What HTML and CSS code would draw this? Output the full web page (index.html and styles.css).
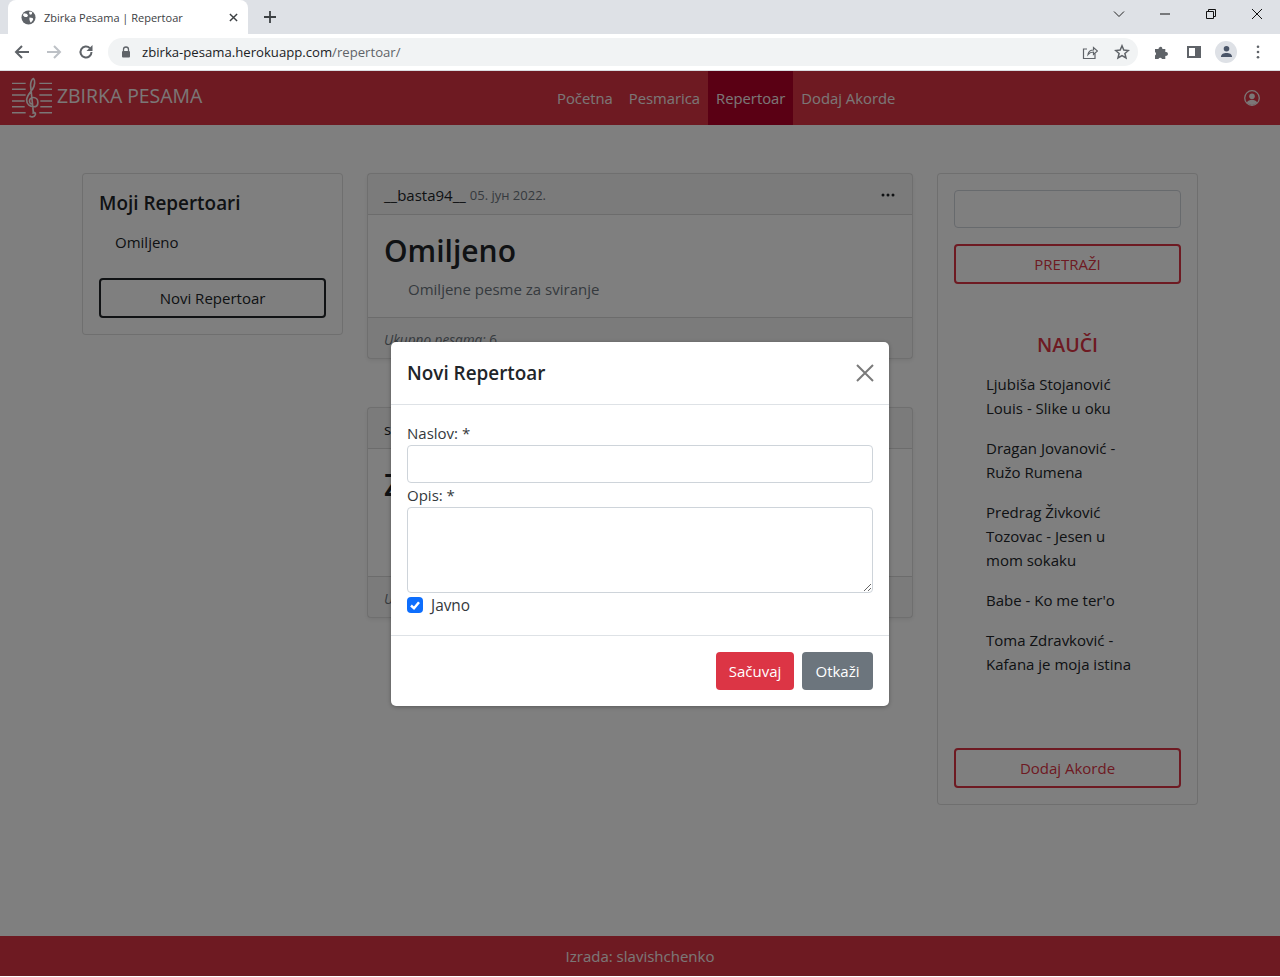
FILE: index.html
```html
<!DOCTYPE html>
<html lang="sr">

<head>
	<meta charset="UTF-8">
	<meta name="viewport" content="width=device-width, initial-scale=1.0">
	<title>Zbirka Pesama | Repertoar</title>
	<link rel="stylesheet" href="styles.css">
</head>

<body>
	<!-- browser window -->
	<div class="tabstrip">
		<div class="tab">
			<svg class="tab-globe" viewBox="0 0 16 16"><circle cx="8" cy="8" r="7.5" fill="#5f6368"/><path d="M3 3.500l3 .5 1.500 1.500-1 2-2.500 0-2-2zM9.500 1.500l2.500 1-.5 2-2 .5-1-2zM9 8l3.500.5.5 2-2.500 3-1-1.500-.5-2z" fill="#fff"/></svg>
			<span class="tab-title">Zbirka Pesama | Repertoar</span>
			<svg class="tab-close" viewBox="0 0 10 10"><path d="M1 1l8 8M9 1l-8 8" stroke="#3c4043" stroke-width="1.600"/></svg>
		</div>
		<svg class="tab-new" viewBox="0 0 12 12"><path d="M6 0v12M0 6h12" stroke="#3c4043" stroke-width="1.800"/></svg>
		<div class="win-btns">
			<svg viewBox="0 0 12 12"><path d="M1 3.500l5 5 5-5" fill="none" stroke="#222" stroke-width="1"/></svg>
			<svg viewBox="0 0 12 12"><path d="M1 6h10" stroke="#111" stroke-width="1"/></svg>
			<svg viewBox="0 0 12 12"><path d="M1.500 3.500h7v7h-7zM3.500 3.500v-2h7v7h-2" fill="none" stroke="#111" stroke-width="1"/></svg>
			<svg viewBox="0 0 12 12"><path d="M1 1l10 10M11 1l-10 10" stroke="#111" stroke-width="1"/></svg>
		</div>
	</div>
	<div class="toolbar">
		<svg class="tool-icon" viewBox="0 0 16 16"><path d="M15 8H2M8 2L2 8l6 6" fill="none" stroke="#5f6368" stroke-width="2"/></svg>
		<svg class="tool-icon" viewBox="0 0 16 16"><path d="M1 8h13M8 2l6 6-6 6" fill="none" stroke="#bdc1c6" stroke-width="2"/></svg>
		<svg class="tool-icon" viewBox="0 0 16 16"><path d="M13.500 8a5.500 5.500 0 1 1-1.600-3.900" fill="none" stroke="#5f6368" stroke-width="2"/><path d="M14.500 1v6h-6z" fill="#5f6368"/></svg>
		<div class="omnibox">
			<svg class="lock" viewBox="0 0 10 12"><path d="M2.500 5V3.500a2.500 2.500 0 0 1 5 0V5" fill="none" stroke="#5f6368" stroke-width="1.300"/><rect x="1" y="5" width="8" height="6.500" rx="1" fill="#5f6368"/></svg>
			<span class="url">zbirka-pesama.herokuapp.com<span class="url-path">/repertoar/</span></span>
			<svg class="omni-icon" viewBox="0 0 16 16"><path d="M13 9.500V14.500H1.500V5H5" fill="none" stroke="#5f6368" stroke-width="1.200"/><path d="M6 10.500c.5-3 2.500-4.500 5.500-4.500V3.500L15.500 7l-4 3.500V8c-2.500 0-4 .8-5.500 2.500z" fill="none" stroke="#5f6368" stroke-width="1.200"/></svg>
			<svg class="omni-icon" viewBox="0 0 16 16"><path d="M8 1.800l1.800 4.300 4.600.4-3.500 3 1.100 4.500L8 11.600l-4 2.400 1.100-4.500-3.500-3 4.600-.4z" fill="none" stroke="#5f6368" stroke-width="1.500"/></svg>
		</div>
		<svg class="ext-icon" viewBox="0 0 16 16"><path d="M1 5h3.500a2 2 0 0 1 3.800-1V5h3v3a2 2 0 1 1 0 3.800V15H8a2 2 0 0 0-3.600 0H1v-3.500a2 2 0 0 0 0-3.500z" fill="#5f6368"/></svg>
		<svg class="ext-icon" viewBox="0 0 16 16"><path d="M1 2h14v12H1zM3 4v8h6V4z" fill="#5f6368" fill-rule="evenodd"/></svg>
		<span class="avatar">
			<svg viewBox="0 0 14 14"><circle cx="7" cy="4" r="3" fill="#4a5568"/><path d="M1 13c0-3.500 3-4.500 6-4.500s6 1 6 4.500z" fill="#4a5568"/></svg>
		</span>
		<svg class="dots-icon" viewBox="0 0 4 16"><circle cx="2" cy="2" r="1.500" fill="#5f6368"/><circle cx="2" cy="8" r="1.500" fill="#5f6368"/><circle cx="2" cy="14" r="1.500" fill="#5f6368"/></svg>
	</div>

	<!-- the site itself -->
	<div class="page">
		<nav class="navbar">
			<a class="brand" href="#">
				<svg class="brand-logo" viewBox="0 0 42 42">
					<path d="M0 6h14M28 6h13M0 12h14M28 12h13M0 18h14M28 18h13M0 24h13M29 24h12M0 30h13M29 30h12M0 36h14M28 36h13" stroke="currentColor" stroke-width="1.500"/>
					<path d="M18 39c1 2 5 2 6-1 .5-2-2-3-3-1M22 37L19 8c0-3 1.500-7 3-7 2 2 1.500 7-1 11-3 4-6 7-6 11 0 5 4 7 7 7 3 0 4.500-2 4.500-4.500 0-3-2-5-4.500-5-3 0-4.500 2-4 4.500.3 1.500 1 2 2 2.500" fill="none" stroke="currentColor" stroke-width="1.700"/>
				</svg>
				<span>ZBIRKA PESAMA</span>
			</a>
			<ul class="nav-links">
				<li><a href="#">Početna</a></li>
				<li><a href="#">Pesmarica</a></li>
				<li><a class="active" href="#">Repertoar</a></li>
				<li><a href="#">Dodaj Akorde</a></li>
			</ul>
			<svg class="nav-user" viewBox="0 0 16 16">
				<circle cx="8" cy="8" r="7.300" fill="none" stroke="currentColor" stroke-width="1.300"/>
				<circle cx="8" cy="6.200" r="2.800" fill="currentColor"/>
				<path d="M2.800 12.500c1-2 3-2.800 5.200-2.800s4.200.8 5.200 2.800A7 7 0 0 1 8 15a7 7 0 0 1-5.200-2.500z" fill="currentColor"/>
			</svg>
		</nav>

		<main class="content">
			<aside class="card side-left">
				<h5 class="side-title">Moji Repertoari</h5>
				<ul class="rep-list">
					<li>Omiljeno</li>
				</ul>
				<button class="btn btn-dark-outline">Novi Repertoar</button>
			</aside>

			<section class="feed">
				<article class="card post">
					<div class="post-head">
						<span class="post-user">__basta94__</span>
						<span class="post-date">05. јун 2022.</span>
						<svg class="post-menu" viewBox="0 0 14 4"><circle cx="2" cy="2" r="1.500"/><circle cx="7" cy="2" r="1.500"/><circle cx="12" cy="2" r="1.500"/></svg>
					</div>
					<div class="post-body">
						<h2 class="post-title">Omiljeno</h2>
						<p class="post-text">Omiljene pesme za sviranje</p>
					</div>
					<div class="post-foot"><em>Ukupno pesama:</em> 6</div>
				</article>

				<article class="card post">
					<div class="post-head">
						<span class="post-user">slavishchenko</span>
						<span class="post-date">05. јун 2022.</span>
					</div>
					<div class="post-body post-body-tall">
						<h2 class="post-title">Zabavne</h2>
						<p class="post-text">Zabavne pesme</p>
					</div>
					<div class="post-foot"><em>Ukupno pesama:</em> 4</div>
				</article>
			</section>

			<aside class="card side-right">
				<input class="field" type="text">
				<button class="btn btn-red-outline search-btn">PRETRAŽI</button>
				<h5 class="learn-title">NAUČI</h5>
				<ul class="learn-list">
					<li>Ljubiša Stojanović Louis - Slike u oku</li>
					<li>Dragan Jovanović - Ružo Rumena</li>
					<li>Predrag Živković Tozovac - Jesen u mom sokaku</li>
					<li>Babe - Ko me ter'o</li>
					<li>Toma Zdravković - Kafana je moja istina</li>
				</ul>
				<button class="btn btn-red-outline add-btn">Dodaj Akorde</button>
			</aside>
		</main>

		<footer class="footer">Izrada: slavishchenko</footer>

		<div class="backdrop"></div>

		<div class="modal">
			<div class="modal-head">
				<h5 class="modal-title">Novi Repertoar</h5>
				<svg class="modal-close" viewBox="0 0 18 18"><path d="M1 1l16 16M17 1L1 17" stroke="#7a7a7a" stroke-width="2"/></svg>
			</div>
			<form class="modal-body">
				<label class="form-label" for="naslov">Naslov: *</label>
				<input class="field" type="text" id="naslov">
				<label class="form-label" for="opis">Opis: *</label>
				<textarea class="field field-area" id="opis"></textarea>
				<div class="check-row">
					<span class="check">
						<svg viewBox="0 0 16 16"><path d="M4 8.500l3 2.800 5-6" fill="none" stroke="#fff" stroke-width="2.500"/></svg>
					</span>
					<label class="check-label">Javno</label>
				</div>
			</form>
			<div class="modal-foot">
				<button class="btn btn-red">Sačuvaj</button>
				<button class="btn btn-gray">Otkaži</button>
			</div>
		</div>
	</div>
</body>

</html>
```

FILE: styles.css
```css
* {
	margin: 0;
	padding: 0;
	box-sizing: border-box;
}

body {
	height: 977px;
	overflow: hidden;
	display: flex;
	flex-direction: column;
	background: #fff;
	color: #212529;
	font-family: "Open Sans", "Noto Sans", sans-serif;
	font-size: 15px;
}

ul {
	list-style: none;
}

a {
	color: inherit;
	text-decoration: none;
}

/* browser window */
.tabstrip {
	height: 34px;
	display: flex;
	align-items: flex-end;
	padding-left: 8px;
	background: #dee1e6;
}

.tab {
	width: 240px;
	height: 34px;
	display: flex;
	align-items: center;
	padding: 0 10px 0 13px;
	background: #fff;
	border-radius: 8px 8px 0 0;
}

.tab-globe {
	width: 15px;
	height: 15px;
	margin-right: 8px;
}

.tab-title {
	flex: 1;
	font-size: 11px;
	color: #3c4043;
}

.tab-close {
	width: 9px;
	height: 9px;
}

.tab-new {
	width: 12px;
	height: 12px;
	margin: 0 0 11px 16px;
}

.win-btns {
	margin-left: auto;
	display: flex;
	gap: 34px;
	align-self: flex-start;
	padding: 8px 17px 0 0;
}

.win-btns svg {
	width: 12px;
	height: 12px;
}

.toolbar {
	height: 37px;
	display: flex;
	align-items: center;
	padding: 0 0 1px 14px;
	background: #fff;
	border-bottom: 1px solid #dadce0;
}

.tool-icon {
	width: 16px;
	height: 16px;
	margin-right: 16px;
}

.omnibox {
	width: 1030px;
	height: 28px;
	margin-left: -2px;
	display: flex;
	align-items: center;
	padding: 0 8px 0 13px;
	background: #f1f3f4;
	border-radius: 14px;
}

.lock {
	width: 10px;
	height: 12px;
	margin-right: 11px;
}

.url {
	flex: 1;
	font-size: 13.150px;
	color: #202124;
}

.url-path {
	color: #5f6368;
}

.omni-icon {
	width: 16px;
	height: 16px;
	margin-left: 16px;
}

.ext-icon {
	width: 16px;
	height: 16px;
	margin-left: 16px;
}

.avatar {
	width: 22px;
	height: 22px;
	margin-left: 13px;
	display: flex;
	align-items: center;
	justify-content: center;
	border-radius: 50%;
	background: #dee1e6;
}

.avatar svg {
	width: 13px;
	height: 13px;
}

.dots-icon {
	width: 4px;
	height: 14px;
	margin-left: 19px;
}

/* site */
.page {
	position: relative;
	height: 905px;
	display: flex;
	flex-direction: column;
	background: #fff;
}

.navbar {
	height: 54px;
	display: flex;
	align-items: stretch;
	padding: 0 20px 0 12px;
	background: #dc3545;
	color: #f7eeee;
}

.brand {
	width: 191px;
	display: flex;
	align-items: center;
	gap: 4px;
	margin-top: -5px;
	font-size: 19.400px;
}

.brand-logo {
	width: 41px;
	height: 42px;
	flex: none;
	margin-top: 5px;
}

.nav-links {
	display: flex;
	margin-left: 346px;
	font-size: 14.800px;
}

.nav-links a {
	height: 100%;
	display: flex;
	align-items: center;
	padding: 0 8px;
}

.nav-links a.active {
	background: #b40028;
}

.nav-user {
	width: 16px;
	height: 16px;
	margin: auto 0 auto auto;
}

.content {
	flex: 1;
	display: grid;
	grid-template-columns: 261px 546px 261px;
	gap: 24px;
	align-items: start;
	padding: 48px 0 0 82px;
}

.card {
	background: #fff;
	border: 1px solid rgba(0, 0, 0, 0.125);
	border-radius: 4px;
}

.btn {
	height: 38px;
	font-family: inherit;
	font-size: 15px;
	border: none;
	border-radius: 4px;
	background: none;
	color: inherit;
}

.btn-dark-outline {
	width: 100%;
	height: 40px;
	border: 2px solid #212529;
	color: #212529;
}

.btn-red-outline {
	width: 100%;
	height: 40px;
	border: 2px solid #dc3545;
	color: #dc3545;
}

.btn-red {
	width: 78px;
	background: #dc3545;
	color: #fff;
}

.btn-gray {
	width: 71px;
	background: #6c757d;
	color: #fff;
}

.field {
	display: block;
	width: 100%;
	height: 38px;
	background: #fff;
	border: 1px solid #ced4da;
	border-radius: 4px;
}

.side-left {
	height: 162px;
	padding: 16px;
}

.side-title {
	font-size: 18.900px;
	font-weight: 600;
	line-height: 26px;
}

.rep-list {
	margin: 14px 0 24px 16px;
	line-height: 24px;
}

.feed {
	display: flex;
	flex-direction: column;
	gap: 48px;
}

.post {
	box-shadow: 0 2px 4px rgba(0, 0, 0, 0.075);
}

.post-head {
	height: 41px;
	display: flex;
	align-items: center;
	padding: 1px 17px 0 16px;
	background: rgba(0, 0, 0, 0.03);
	border-bottom: 1px solid rgba(0, 0, 0, 0.125);
}

.post-date {
	margin-left: 4px;
	font-size: 13px;
	color: #6c757d;
}

.post-menu {
	width: 14px;
	height: 4px;
	margin-left: auto;
	fill: #212529;
}

.post-body {
	height: 102px;
	padding: 15px 16px 0;
}

.post-body-tall {
	height: 127px;
}

.post-title {
	font-size: 30px;
	font-weight: 600;
	line-height: 42px;
}

.post-text {
	margin: 5px 0 0 24px;
	line-height: 24px;
	color: #6c757d;
}

.post-foot {
	height: 41px;
	padding: 12px 16px;
	font-size: 13.600px;
	color: #6c757d;
	background: rgba(0, 0, 0, 0.03);
	border-top: 1px solid rgba(0, 0, 0, 0.125);
}

.side-right {
	height: 632px;
	display: flex;
	flex-direction: column;
	padding: 16px;
}

.search-btn {
	margin-top: 16px;
}

.learn-title {
	margin-top: 48px;
	text-align: center;
	font-size: 19.500px;
	font-weight: 600;
	line-height: 26px;
	color: #dc3545;
}

.learn-list {
	margin-top: 14px;
	padding: 0 45px 0 32px;
	line-height: 24px;
}

.learn-list li {
	margin-bottom: 16px;
}

.add-btn {
	margin-top: auto;
}

.footer {
	height: 40px;
	display: flex;
	align-items: center;
	justify-content: center;
	background: #dc3545;
	color: #f7eeee;
}

.backdrop {
	position: absolute;
	inset: 0;
	background: rgba(0, 0, 0, 0.5);
}

.modal {
	position: absolute;
	left: 391px;
	top: 271px;
	width: 498px;
	height: 364px;
	display: flex;
	flex-direction: column;
	background: #fff;
	border-radius: 5px;
	box-shadow: 0 1px 4px rgba(0, 0, 0, 0.3);
}

.modal-head {
	height: 63px;
	display: flex;
	align-items: center;
	justify-content: space-between;
	padding: 0 15px 0 16px;
	border-bottom: 1px solid #dee2e6;
}

.modal-title {
	font-size: 18.900px;
	font-weight: 600;
}

.modal-close {
	width: 18px;
	height: 18px;
}

.modal-body {
	flex: 1;
	padding: 16px 16px 0;
}

.form-label {
	display: block;
	height: 24px;
	line-height: 24px;
	color: #34383c;
}

.field-area {
	height: 86px;
	resize: vertical;
}

.check-row {
	display: flex;
	align-items: center;
	gap: 8px;
	height: 24px;
}

.check {
	width: 16px;
	height: 16px;
	border-radius: 4px;
	background: #0d6efd;
}

.check svg {
	display: block;
	width: 16px;
	height: 16px;
}

.check-label {
	font-size: 15.400px;
	color: #34383c;
}

.modal-foot {
	height: 71px;
	display: flex;
	align-items: center;
	justify-content: flex-end;
	gap: 8px;
	padding: 0 16px;
	border-top: 1px solid #dee2e6;
}
```
